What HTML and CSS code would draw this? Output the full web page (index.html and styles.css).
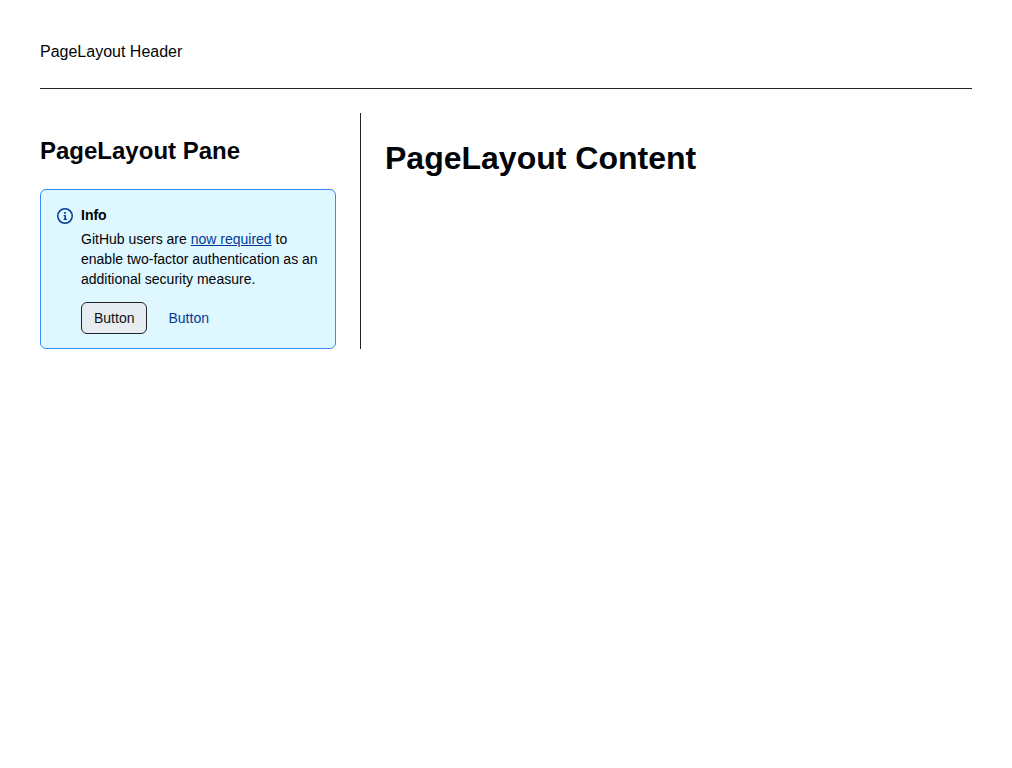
FILE: index.html
```html
<!DOCTYPE html>
<html lang="en">
<head>
<meta charset="utf-8">
<title>PageLayout</title>
<link rel="stylesheet" href="styles.css">
</head>
<body>
<div class="page-layout">
  <header class="page-header">PageLayout Header</header>
  <div class="columns">
    <aside class="pane">
      <h2 class="pane-title">PageLayout Pane</h2>
      <section class="banner" aria-labelledby="banner-title">
        <svg class="banner-icon" viewBox="0 0 16 16" width="16" height="16" aria-hidden="true"><path d="M0 8a8 8 0 1 1 16 0A8 8 0 0 1 0 8Zm8-6.5a6.5 6.5 0 1 0 0 13 6.5 6.5 0 0 0 0-13ZM6.5 7.75A.75.75 0 0 1 7.25 7h1a.75.75 0 0 1 .75.75v2.75h.25a.75.75 0 0 1 0 1.5h-2a.75.75 0 0 1 0-1.5h.25v-2h-.25a.75.75 0 0 1-.75-.75ZM8 6a1 1 0 1 1 0-2 1 1 0 0 1 0 2Z"/></svg>
        <div class="banner-body">
          <h3 class="banner-title" id="banner-title">Info</h3>
          <p class="banner-text">GitHub users are <a class="link" href="#">now required</a> to enable two-factor authentication as an additional security measure.</p>
          <div class="banner-actions">
            <button class="button" type="button">Button</button>
            <button class="button button-link" type="button">Button</button>
          </div>
        </div>
      </section>
    </aside>
    <main class="content">
      <h1 class="content-title">PageLayout Content</h1>
    </main>
  </div>
</div>
</body>
</html>
```
FILE: styles.css
```css
* {
  box-sizing: border-box;
}

body {
  margin: 0;
  background: #ffffff;
  color: #010409;
  font-family: "Liberation Sans", Arial, sans-serif;
  font-size: 16px;
  line-height: 24px;
}

.page-layout {
  padding: 40px;
}

.page-header {
  padding-bottom: 24px;
  border-bottom: 1px solid #20252c;
}

.columns {
  display: flex;
  margin-top: 24px;
}

.pane {
  flex: 0 0 auto;
  width: 296px;
  margin-right: 24px;
}

.pane-title {
  margin: 20px 0;
  font-size: 24px;
  line-height: 36px;
}

.content {
  flex: 1;
  padding-left: 24px;
  border-left: 1px solid #20252c;
}

.content-title {
  margin: 21px 0;
  font-size: 32px;
  line-height: 48px;
}

.banner {
  display: flex;
  gap: 8px;
  padding: 15px 16px 14px;
  border: 1px solid #368cf9;
  border-radius: 6px;
  background: #dff7ff;
  font-size: 14px;
  line-height: 20px;
}

.banner-icon {
  flex: none;
  margin-top: 3px;
  fill: #023b95;
}

.banner-body {
  flex: 1;
}

.banner-title {
  margin: 0 0 4px;
  font-size: 14px;
}

.banner-text {
  margin: 0;
}

.link {
  color: #023b95;
}

.banner-actions {
  display: flex;
  gap: 8px;
  margin-top: 13px;
}

.button {
  height: 32px;
  padding: 0 12px;
  border: 1px solid #20252c;
  border-radius: 6px;
  background: #e7ecf0;
  color: #0e1116;
  font: inherit;
}

.button-link {
  border-color: transparent;
  background: transparent;
  color: #023b95;
}
```
